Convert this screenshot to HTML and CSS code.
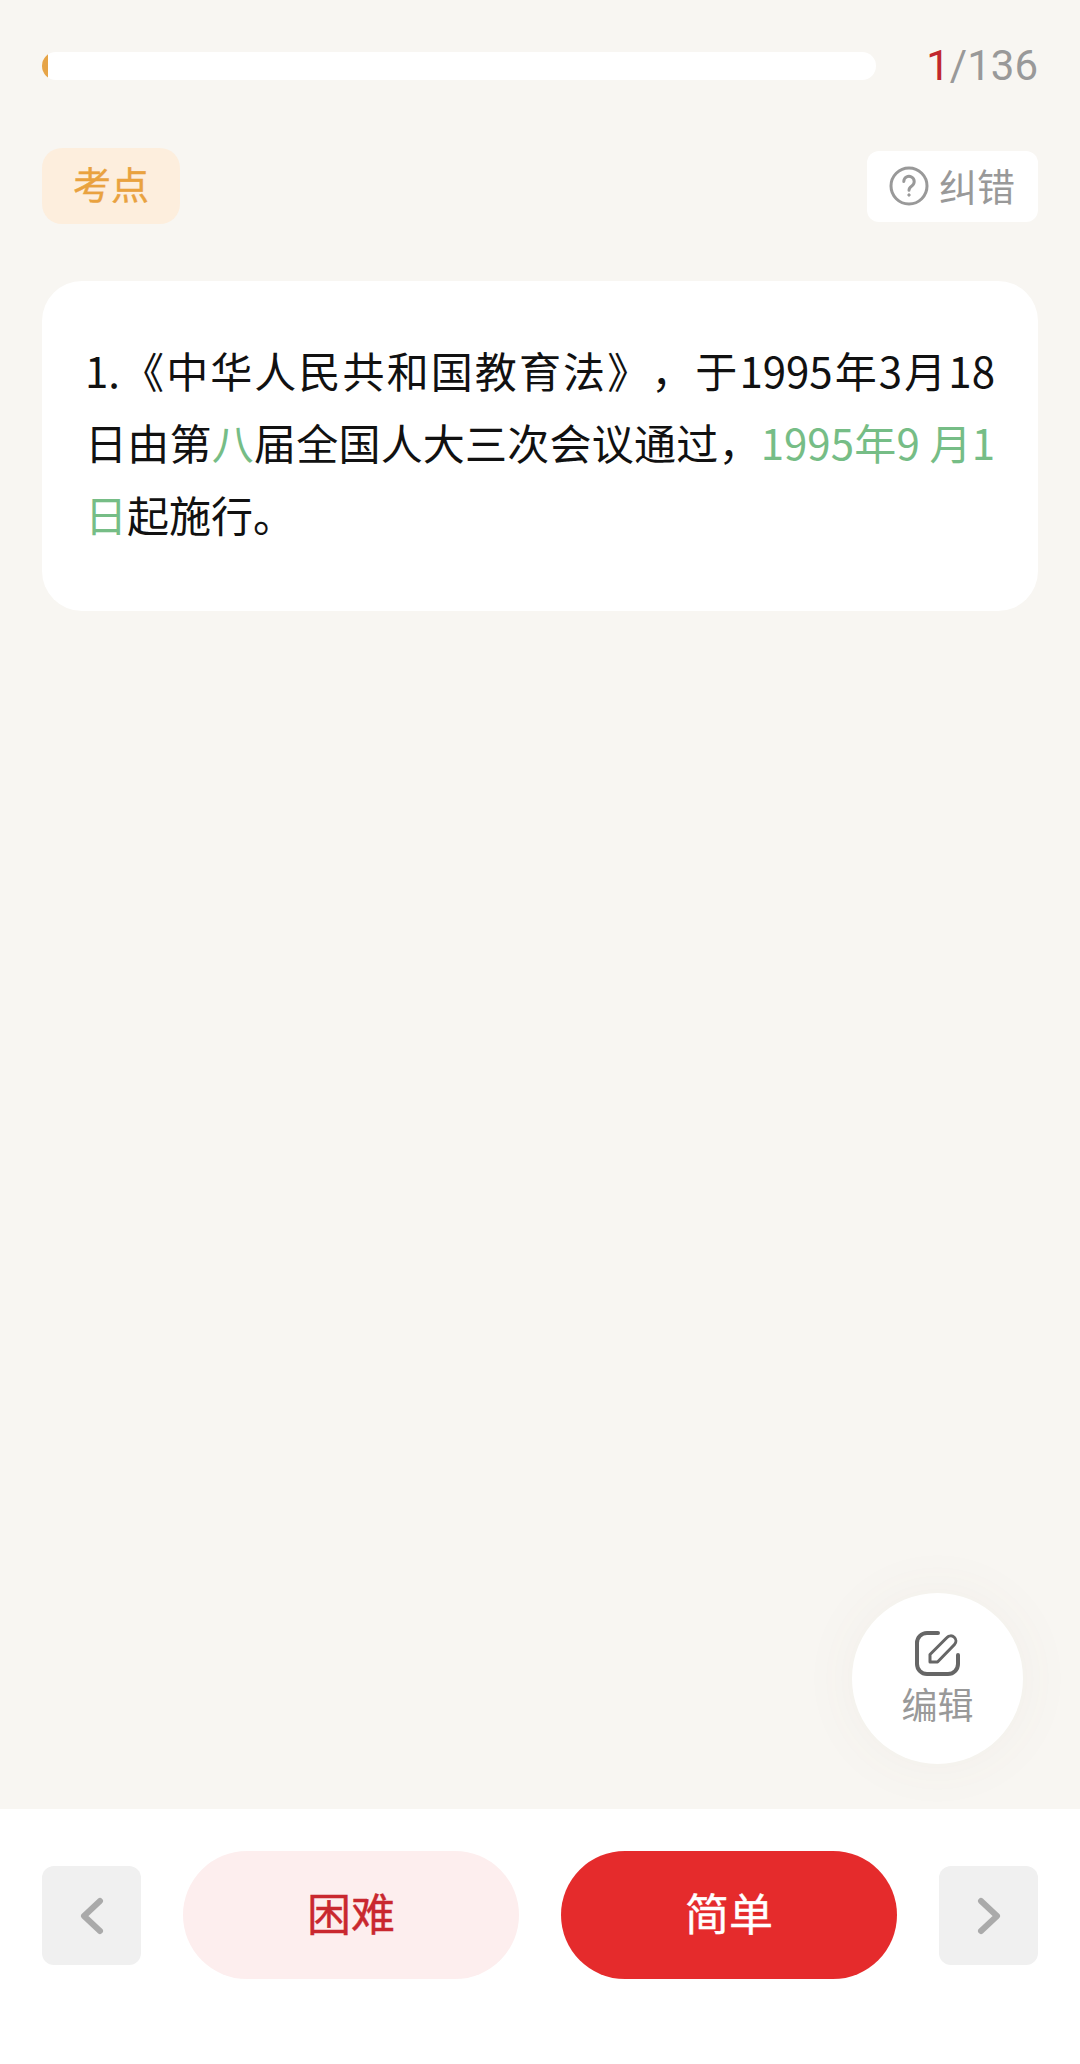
FILE: index.html
```html
<!DOCTYPE html>
<html lang="zh-CN">
<head>
<meta charset="utf-8">
<title>考点</title>
<link rel="stylesheet" href="styles.css">
</head>
<body>
<div class="page">
  <main class="main">
    <div class="progress-row">
      <div class="track"><div class="track-fill"></div></div>
      <div class="counter"><span class="current">1</span>/136</div>
    </div>
    <div class="tool-row">
      <div class="tag">考点</div>
      <div class="report">
        <svg class="report-icon" viewBox="0 0 40 40" fill="none" stroke="#999" stroke-width="3">
          <circle cx="20" cy="20" r="18"/>
          <path d="M14.8 15.5a5.2 5.2 0 1 1 8 4.4c-1.8 1.2-2.8 2.2-2.8 4.3" stroke-linecap="round"/>
          <circle cx="20" cy="29" r="1.2" fill="#999" stroke-width="1"/>
        </svg>
        <span class="report-label">纠错</span>
      </div>
    </div>
    <section class="card">
      <p class="question">1.《中华人民共和国教育法》，于1995年3月18日由第<span class="hl">八</span>届全国人大三次会议通过，<span class="hl">1995年9 月1日</span>起施行。</p>
    </section>
    <button class="fab">
      <svg class="fab-icon" viewBox="0 0 45 45" fill="none" stroke="#666" stroke-linecap="round" stroke-linejoin="round">
        <path d="M23 2H12A10 10 0 0 0 2 12V33A10 10 0 0 0 12 43H33A10 10 0 0 0 43 33V24" stroke-width="4"/>
        <path d="M15 31V23.5L32 6.5A4.5 4.5 0 0 1 39.5 13.5L22.5 31Z" stroke-width="3"/>
      </svg>
      <span>编辑</span>
    </button>
  </main>
  <footer class="footer">
    <button class="nav">
      <svg class="chev" viewBox="0 0 24 38" fill="none" stroke="#aaa" stroke-width="6" stroke-linecap="round" stroke-linejoin="round"><path d="M20 4L4 19L20 34"/></svg>
    </button>
    <button class="answer hard">困难</button>
    <button class="answer easy">简单</button>
    <button class="nav">
      <svg class="chev" viewBox="0 0 24 38" fill="none" stroke="#aaa" stroke-width="6" stroke-linecap="round" stroke-linejoin="round"><path d="M4 4L20 19L4 34"/></svg>
    </button>
  </footer>
</div>
</body>
</html>
```
FILE: styles.css
```css
* { box-sizing: border-box; }
html, body { margin: 0; padding: 0; }
body {
  font-family: "Noto Sans CJK SC", "Noto Sans", sans-serif;
  background: #f8f6f2;
  text-spacing-trim: space-all;
}
button { font-family: inherit; border: 0; padding: 0; }
.page {
  width: 1080px;
  height: 2064px;
  display: flex;
  flex-direction: column;
}
.main {
  position: relative;
  flex: 1;
  padding: 44px 42px 0;
}
.progress-row {
  display: flex;
  align-items: center;
  height: 44px;
}
.track {
  width: 834px;
  height: 28px;
  border-radius: 14px;
  background: #fff;
  overflow: hidden;
}
.track-fill {
  width: 6px;
  height: 100%;
  border-radius: 0 3px 3px 0;
  background: #e6a447;
}
.counter {
  margin-left: auto;
  font-family: Roboto, "Noto Sans", sans-serif;
  font-size: 42px;
  line-height: 44px;
  color: #999;
}
.current { color: #c1272d; }
.tool-row {
  display: flex;
  align-items: center;
  justify-content: space-between;
  margin-top: 60px;
}
.tag {
  width: 138px;
  height: 76px;
  border-radius: 20px;
  background: #fdeedd;
  color: #e9a23f;
  font-size: 38px;
  -webkit-text-stroke: .4px #e9a23f;
  line-height: 70px;
  text-align: center;
}
.report {
  width: 171px;
  height: 71px;
  border-radius: 12px;
  background: #fff;
  color: #999;
  font-size: 38px;
  display: flex;
  align-items: center;
  gap: 10px;
  padding-left: 22px;
}
.report-label { line-height: 67px; height: 71px; }
.report-icon { width: 40px; height: 40px; }
.card {
  margin-top: 57px;
  height: 330px;
  border-radius: 40px;
  background: #fff;
  padding: 53px 43px 0;
}
.question {
  margin: 0;
  font-size: 42px;
  line-height: 72px;
  color: #111;
  text-align: justify;
}
.hl { color: #76bd86; }
.fab {
  position: absolute;
  left: 852px;
  top: 1593px;
  width: 171px;
  height: 171px;
  border-radius: 50%;
  background: #fff;
  box-shadow: 0 0 60px rgba(120, 100, 80, .05);
  color: #999;
  font-size: 36px;
  line-height: 42px;
  display: flex;
  flex-direction: column;
  align-items: center;
  padding-top: 38px;
}
.fab-icon { width: 45px; height: 45px; margin-bottom: 6px; }
.footer {
  height: 255px;
  background: #fff;
  padding: 42px 42px 0;
  display: flex;
  align-items: flex-start;
  gap: 42px;
}
.nav {
  width: 99px;
  height: 99px;
  margin-top: 15px;
  border-radius: 12px;
  background: #f0f0f0;
  display: flex;
  align-items: center;
  justify-content: center;
}
.chev { width: 24px; height: 38px; }
.answer {
  width: 336px;
  height: 128px;
  border-radius: 64px;
  font-size: 44px;
  padding-bottom: 6px;
}
.hard { background: #fdeeee; color: #c9282f; -webkit-text-stroke: .4px #c9282f; }
.easy { background: #e52b2c; color: #fff; -webkit-text-stroke: .4px #fff; }
```
